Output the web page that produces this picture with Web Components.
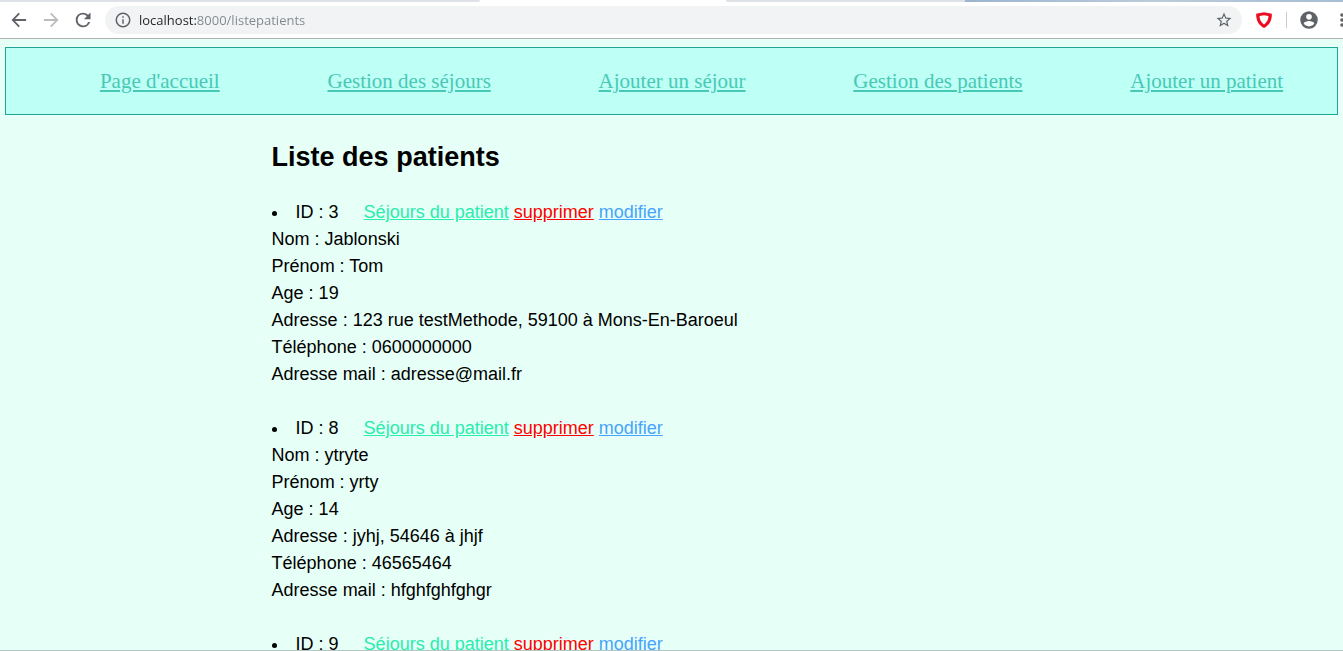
<!DOCTYPE html>
<html lang="fr">
<head>
<meta charset="utf-8">
<title>Liste des patients</title>
<style>
  html, body { height: 100%; margin: 0; }
  body { background: #e6fff7; overflow: hidden; }
</style>
</head>
<body>
<browser-window>
  <browser-toolbar slot="toolbar" url="localhost:8000/listepatients"></browser-toolbar>
  <site-nav>
    <nav-link href="/">Page d'accueil</nav-link>
    <nav-link href="/listesejours">Gestion des séjours</nav-link>
    <nav-link href="/ajoutsejour">Ajouter un séjour</nav-link>
    <nav-link href="/listepatients">Gestion des patients</nav-link>
    <nav-link href="/ajoutpatient">Ajouter un patient</nav-link>
  </site-nav>
  <patient-list>
    <span slot="title">Liste des patients</span>
    <patient-item number="3" nom="Jablonski" prenom="Tom" age="19" adresse="123 rue testMethode, 59100 à Mons-En-Baroeul" telephone="0600000000" mail="adresse@mail.fr"></patient-item>
    <patient-item number="8" nom="ytryte" prenom="yrty" age="14" adresse="jyhj, 54646 à jhjf" telephone="46565464" mail="hfghfghfghgr"></patient-item>
    <patient-item number="9"></patient-item>
  </patient-list>
</browser-window>

<script>
class ShadowElement extends HTMLElement {
  connectedCallback() {
    if (this.shadowRoot) return;
    this.attachShadow({ mode: 'open' }).innerHTML = this.render();
  }
}

customElements.define('browser-window', class extends ShadowElement {
  render() {
    return `
      <style>
        :host { display: flex; flex-direction: column; height: 100vh; box-sizing: border-box; border-bottom: 1px solid #b4c6c1; }
        main { flex: 1; min-height: 0; overflow: hidden; padding: 8px 5px 0; }
      </style>
      <slot name="toolbar"></slot>
      <main><slot></slot></main>`;
  }
});

customElements.define('browser-toolbar', class extends ShadowElement {
  render() {
    return `
      <style>
        :host { display: block; flex: none; background: #fff; border-bottom: 1px solid #b0b1b2; }
        .tabs { display: grid; grid-template-columns: 480fr 246fr 239fr 378fr; height: 2px; }
        .tab { background: #dee1e6; }
        .tab.active { background: #fff; }
        .tab.frame { background: linear-gradient(90deg, #9bb5ce, #bccbdb 50%, #a6bdd3); }
        .tab:first-child { border-bottom-right-radius: 2px; }
        .tab:nth-child(3) { border-bottom-left-radius: 2px; }
        form { display: flex; align-items: center; height: 36px; margin: 0; padding-left: 9px; overflow: hidden; }
        button { display: flex; flex: none; align-items: center; justify-content: center; width: 20px; height: 20px; padding: 0; border: 0; background: none; color: #5f6368; }
        svg { display: block; flex: none; fill: currentColor; }
        .page { display: flex; gap: 12px; }
        .page button:disabled { color: #babcbe; }
        .address { display: flex; flex: 1; align-items: center; gap: 6px; height: 28px; margin-left: 12px; padding: 0 8px; border-radius: 14px; background: #f1f3f4; }
        input { flex: 1; min-width: 0; height: 28px; padding: 0; border: 0; outline: 0; color: #6f747a;
          font: 13px/28px "Open Sans", "Noto Sans", sans-serif;
          background: linear-gradient(90deg, #202124 58px, #80868b 58px); -webkit-background-clip: text; background-clip: text; -webkit-text-fill-color: transparent; }
        .tools { display: flex; align-items: center; margin-left: 12px; }
        .rule { width: 1px; height: 16px; margin: 0 12px; background: #c8cacc; }
        .menu { width: 3px; margin-left: 21px; overflow: hidden; justify-content: flex-start; }
      </style>
      <div class="tabs"><div class="tab"></div><div class="tab active"></div><div class="tab"></div><div class="tab frame"></div></div>
      <form>
        <div class="page">
          <button type="button" aria-label="Précédent"><svg width="20" height="20" viewBox="0 0 24 24"><path d="M20.5 10.8H7.2l5.900-5.900L11.500 3.300 3 12l8.500 8.700 1.600-1.600-5.900-5.900h13.300z"/></svg></button>
          <button type="button" aria-label="Suivant" disabled><svg width="20" height="20" viewBox="0 0 24 24"><path d="M3.500 10.800h13.300l-5.900-5.900L12.500 3.300 21 12l-8.500 8.700-1.600-1.600 5.900-5.900H3.500z"/></svg></button>
          <button type="button" aria-label="Actualiser"><svg width="20" height="20" viewBox="0 0 24 24"><path d="M18.200 5.800A8.700 8.700 0 0 0 12 3.200a8.800 8.800 0 1 0 8.500 11.100h-2.400A6.500 6.500 0 1 1 12 5.500c1.800 0 3.400.7 4.600 1.900L13 11h8V3z"/></svg></button>
        </div>
        <div class="address">
          <button type="button" aria-label="Informations sur le site"><svg width="18" height="18" viewBox="0 0 24 24"><path d="M11 7h2v2h-2zm0 4h2v6h-2zm1-9a10 10 0 1 0 0 20 10 10 0 0 0 0-20zm0 18a8 8 0 1 1 0-16 8 8 0 0 1 0 16z"/></svg></button>
          <input type="text" aria-label="Adresse" value="${this.getAttribute('url')}">
          <button type="button" aria-label="Ajouter aux favoris"><svg width="18" height="18" viewBox="0 0 24 24"><path d="M22 9.240l-7.190-.62L12 2 9.190 8.630 2 9.240l5.460 4.730L5.820 21 12 17.270 18.180 21l-1.630-7.030L22 9.240zM12 15.400l-3.760 2.270 1-4.280-3.320-2.880 4.380-.38L12 6.100l1.710 4.040 4.380.38-3.320 2.880 1 4.280L12 15.400z"/></svg></button>
        </div>
        <div class="tools">
          <button type="button" aria-label="Protection"><svg width="18" height="18" viewBox="0 0 18 18"><path d="M9 1.300 1.200 2.800C.9 8.800 3.500 14.200 9 17c5.500-2.800 8.100-8.200 7.800-14.200z" fill="#eb0a1e"/><path d="M9 4.200 4.500 5.100C4.600 8.600 6 11.600 9 13.500c3-1.900 4.400-4.900 4.500-8.400z" fill="#fff"/></svg></button>
          <span class="rule"></span>
          <button type="button" aria-label="Profil"><svg width="20" height="20" viewBox="0 0 24 24"><path d="M12 1.500a10.500 10.500 0 1 0 0 21 10.500 10.500 0 0 0 0-21zm0 3.300a3.400 3.400 0 1 1 0 6.800 3.400 3.400 0 0 1 0-6.800zm0 14.900c-2.700 0-5-1.400-6.300-3.400.1-2.100 4.200-3.200 6.300-3.200s6.200 1.100 6.300 3.200c-1.300 2-3.600 3.400-6.300 3.400z"/></svg></button>
          <button type="button" class="menu" aria-label="Menu"><svg width="8" height="20" viewBox="0 0 8 20"><circle cx="2" cy="5" r="1.800"/><circle cx="2" cy="10" r="1.800"/><circle cx="2" cy="15" r="1.800"/></svg></button>
        </div>
      </form>`;
  }
});

customElements.define('site-nav', class extends ShadowElement {
  render() {
    return `
      <style>
        :host { display: block; }
        nav { display: flex; justify-content: space-around; padding: 21px 0 21px 40px; border: 1px solid #1fa594; background: #befff6; font: 21px/24px "Liberation Serif", "Times New Roman", serif; }
      </style>
      <nav><slot></slot></nav>`;
  }
});

customElements.define('nav-link', class extends ShadowElement {
  render() {
    return `
      <style>
        :host { display: block; }
        a { color: #48c9b5; }
      </style>
      <a href="${this.getAttribute('href')}"><slot></slot></a>`;
  }
});

customElements.define('patient-list', class extends ShadowElement {
  render() {
    return `
      <style>
        :host { display: block; margin: 24px 20% 0; color: #000; font: 18px/27px "Liberation Sans", Arial, sans-serif; }
        h1 { margin: 0 0 24px; font-size: 27px; line-height: 36px; }
        .list { display: flex; flex-direction: column; gap: 27px; }
      </style>
      <h1><slot name="title"></slot></h1>
      <div class="list" role="list"><slot></slot></div>`;
  }
});

customElements.define('patient-item', class extends ShadowElement {
  render() {
    const fields = [['nom', 'Nom'], ['prenom', 'Prénom'], ['age', 'Age'], ['adresse', 'Adresse'], ['telephone', 'Téléphone'], ['mail', 'Adresse mail']];
    const number = this.getAttribute('number');
    this.setAttribute('role', 'listitem');
    return `
      <style>
        :host { display: block; }
        .head { display: list-item; list-style: disc inside; }
        .stays { margin-left: 20px; color: #2aedae; }
        .delete { color: #f00; }
        .edit { color: #46a3ff; }
      </style>
      <div class="head">ID : ${number} <a class="stays" href="/sejours/${number}">Séjours du patient</a> <a class="delete" href="/supprimer/${number}">supprimer</a> <a class="edit" href="/modifier/${number}">modifier</a></div>
      ${fields.filter(([key]) => this.hasAttribute(key)).map(([key, label]) => `<div>${label} : ${this.getAttribute(key)}</div>`).join('')}`;
  }
});
</script>
</body>
</html>
